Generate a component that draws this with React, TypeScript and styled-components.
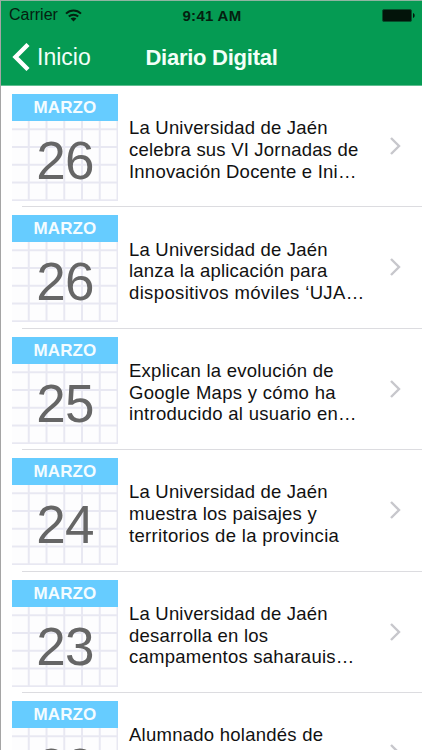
import React from "react";
import styled, { createGlobalStyle } from "styled-components";

const GlobalStyle = createGlobalStyle`
  * { box-sizing: border-box; }
  html, body { margin: 0; background: #fff; }
  body { font-family: "Liberation Sans", Arial, sans-serif; overflow: hidden; }
`;

const Screen = styled.main`
  width: 422px;
  height: 750px;
  overflow: hidden;
  background: #fff;
  border-left: 1px solid #a5a5a5;
  border-top: 1px solid #8fb5a1;
`;

const Header = styled.header`
  height: 85px;
  background: #059b53;
  border-bottom: 1px solid #5fbd90;
`;

const StatusBar = styled.div`
  height: 28px;
  display: grid;
  grid-template-columns: 1fr auto 1fr;
  align-items: center;
  padding: 0 7px 0 8px;
  color: #04200f;
  font-size: 16px;
`;

const Network = styled.div`
  display: flex;
  align-items: center;
  gap: 7px;
`;

const Clock = styled.span`
  font-size: 15px;
  font-weight: bold;
  letter-spacing: 0.3px;
`;

const BatteryIcon = styled.svg`
  justify-self: end;
`;

const NavBar = styled.nav`
  height: 56px;
  display: grid;
  grid-template-columns: 1fr auto 1fr;
  align-items: center;
  padding: 0 11px;
  color: #fff;
`;

const BackButton = styled.button`
  display: flex;
  align-items: center;
  gap: 7px;
  padding: 0;
  border: 0;
  background: none;
  color: #f2fff8;
  font: 23px "Liberation Sans", Arial, sans-serif;
`;

const Title = styled.h1`
  margin: 0;
  padding-top: 1px;
  font-size: 22px;
  letter-spacing: -0.25px;
  color: #f2fff8;
`;

const List = styled.ul`
  list-style: none;
  margin: 0;
  padding: 0;
`;

const Row = styled.li`
  height: 121.4px;
  display: grid;
  grid-template-columns: 106px 1fr 14px;
  align-items: start;
  column-gap: 11px;
  padding: 8px 19px 0 11px;
  background: linear-gradient(#dcdce0, #dcdce0) 21px 100% / 401px 1px no-repeat;
`;

const Calendar = styled.div`
  width: 106px;
  height: 107px;
  text-align: center;
`;

const Month = styled.div`
  height: 27px;
  background: #66ccff;
  color: #f4fcff;
  font-size: 17px;
  line-height: 28px;
  font-weight: bold;
  letter-spacing: 0.1px;
`;

const Day = styled.div`
  height: 80px;
  color: #666;
  font-size: 53px;
  line-height: 79px;
  letter-spacing: -0.8px;
  background-color: #fdfdfe;
  background-image:
    linear-gradient(90deg, transparent 16px, #e8e8f2 16px, #e8e8f2 17.7px),
    linear-gradient(transparent 16px, #e8e8f2 16px, #e8e8f2 17.7px);
  background-size: 17.75px 100%, 100% 17.75px;
  background-position: 0 0, 0 -8.5px;
`;

const Headline = styled.div`
  padding-top: 23.3px;
  color: #111;
  font-size: 18.5px;
  line-height: 21.7px;
  white-space: nowrap;
`;

const Line = styled.div<{ $spacing: number }>`
  letter-spacing: ${(p) => p.$spacing}px;
`;

const Chevron = styled.svg`
  margin-top: 42px;
`;

type Item = { day: string; lines: [string, number][] };

const items: Item[] = [
  { day: "26", lines: [["La Universidad de Jaén", 0.2], ["celebra sus VI Jornadas de", 0.2], ["Innovación Docente e Ini…", 0.22]] },
  { day: "26", lines: [["La Universidad de Jaén", 0.2], ["lanza la aplicación para", 0.22], ["dispositivos móviles ‘UJA…", 0.36]] },
  { day: "25", lines: [["Explican la evolución de", 0.26], ["Google Maps y cómo ha", 0.3], ["introducido al usuario en…", 0.3]] },
  { day: "24", lines: [["La Universidad de Jaén", 0.2], ["muestra los paisajes y", 0.22], ["territorios de la provincia", 0.32]] },
  { day: "23", lines: [["La Universidad de Jaén", 0.2], ["desarrolla en los", 0.2], ["campamentos saharauis…", 0.25]] },
  { day: "22", lines: [["Alumnado holandés de", 0.25]] },
];

export default function App() {
  return (
    <>
      <GlobalStyle />
      <Screen>
        <Header>
          <StatusBar>
            <Network>
              <span>Carrier</span>
              <svg width="17" height="13" viewBox="0 0 17 13" fill="none" stroke="#04200f">
                <path d="M1 4.6C5.3.5 11.7.5 16 4.6" strokeWidth="2" />
                <path d="M3.8 7.6c2.7-2.5 6.7-2.5 9.4 0" strokeWidth="2" />
                <path d="M8.5 12.5 5.6 9.6c1.7-1.5 4.1-1.5 5.8 0z" fill="#04200f" stroke="none" />
              </svg>
            </Network>
            <Clock>9:41 AM</Clock>
            <BatteryIcon width="33" height="13" viewBox="0 0 33 13">
              <rect x="0.5" y="0.5" width="29" height="12" rx="1.5" fill="#03140a" stroke="#064f2b" />
              <path d="M31 4c2.2 1 2.2 4 0 5z" fill="#03140a" />
            </BatteryIcon>
          </StatusBar>
          <NavBar>
            <BackButton>
              <svg width="18" height="28" viewBox="0 0 18 28" fill="none" stroke="#fff" strokeWidth="4.4">
                <path d="M16 1.5 3.5 14 16 26.5" />
              </svg>
              <span>Inicio</span>
            </BackButton>
            <Title>Diario Digital</Title>
          </NavBar>
        </Header>
        <List>
          {items.map((item, i) => (
            <Row key={i}>
              <Calendar>
                <Month>MARZO</Month>
                <Day>{item.day}</Day>
              </Calendar>
              <Headline>
                {item.lines.map(([text, spacing]) => (
                  <Line key={text} $spacing={spacing}>{text}</Line>
                ))}
              </Headline>
              <Chevron width="14" height="20" viewBox="0 0 14 20" fill="none" stroke="#c7c7cc" strokeWidth="2.4">
                <path d="M2 2l8 8-8 8" />
              </Chevron>
            </Row>
          ))}
        </List>
      </Screen>
    </>
  );
}
